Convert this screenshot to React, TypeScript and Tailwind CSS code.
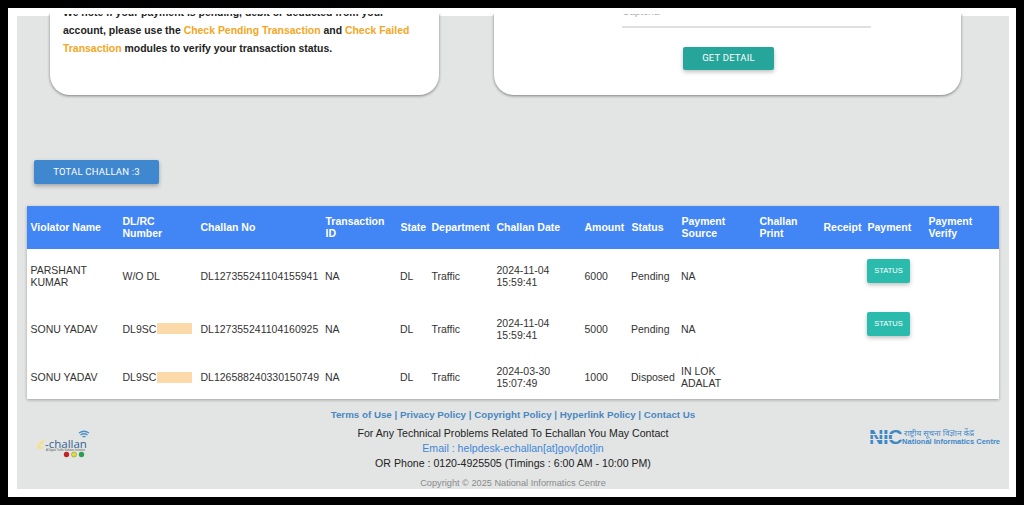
const columns = [
  { title: "Violator Name", width: "w-[92px]" },
  { title: "DL/RC Number", width: "w-[78px]" },
  { title: "Challan No", width: "w-[125px]" },
  { title: "Transaction ID", width: "w-[75px]" },
  { title: "State", width: "w-[31px]" },
  { title: "Department", width: "w-[65px]" },
  { title: "Challan Date", width: "w-[88px]" },
  { title: "Amount", width: "w-[47px]" },
  { title: "Status", width: "w-[50px]" },
  { title: "Payment Source", width: "w-[78px]" },
  { title: "Challan Print", width: "w-[64px]" },
  { title: "Receipt", width: "w-[44px]" },
  { title: "Payment", width: "w-[61px]" },
  { title: "Payment Verify", width: "w-[74px]" },
];

const rows = [
  {
    name: "PARSHANT KUMAR",
    plate: "W/O DL",
    hidden: false,
    challan: "DL127355241104155941",
    date: "2024-11-04 15:59:41",
    amount: "6000",
    status: "Pending",
    source: "NA",
    canCheck: true,
    height: "h-[53px]",
  },
  {
    name: "SONU YADAV",
    plate: "DL9SC",
    hidden: true,
    challan: "DL127355241104160925",
    date: "2024-11-04 15:59:41",
    amount: "5000",
    status: "Pending",
    source: "NA",
    canCheck: true,
    height: "h-[53px]",
  },
  {
    name: "SONU YADAV",
    plate: "DL9SC",
    hidden: true,
    challan: "DL126588240330150749",
    date: "2024-03-30 15:07:49",
    amount: "1000",
    status: "Disposed",
    source: "IN LOK ADALAT",
    canCheck: false,
    height: "h-[44px]",
  },
];

function EChallanLogo() {
  return (
    <div className="relative h-[30px] w-[55px]">
      <svg className="absolute left-0 top-0" width="55" height="30" viewBox="0 0 55 30" fill="none">
        {/* signal arcs */}
        <path d="M43 3 C46 0.8 50 0.8 53 3" stroke="#4a90c8" strokeWidth="1.5" />
        <path d="M44.5 5 C46.5 3.6 49.5 3.6 51.5 5" stroke="#4a90c8" strokeWidth="1.4" />
        <path d="M46.5 7 C47.5 6.2 48.5 6.2 49.5 7" stroke="#4a90c8" strokeWidth="1.3" />
        {/* e swoosh */}
        <path d="M9 9 C4 11 0 15 1.5 18.5 C4 20 7 18.5 9 16.5 C6.5 17.5 4.5 17.5 4 16 C5.5 14.5 8 12.5 9 9 Z" fill="#f6df8f" />
        {/* traffic lights */}
        <circle cx="30.5" cy="24.5" r="2.7" fill="#c0242a" />
        <circle cx="38" cy="24.5" r="2.5" fill="#e6da3a" stroke="#7d9a3a" strokeWidth="0.6" />
        <circle cx="45.5" cy="24.5" r="2.7" fill="#2f9e55" />
      </svg>
      <span className="absolute left-[9px] top-[6px] whitespace-nowrap font-['Open_Sans',sans-serif] text-[11.5px] leading-[15px] text-[#34618f]">
        -challan
      </span>
      <span className="absolute left-[10px] top-[19px] whitespace-nowrap font-['Liberation_Sans',sans-serif] text-[2.7px] leading-[3px] text-[#555]">
        A Digital Traffic Solution Initiative
      </span>
    </div>
  );
}

function NicLogo() {
  return (
    <div className="flex items-center gap-[2px] text-[#3f88c5]">
      <div className="relative h-[16px] w-[31px]">
        <span className="block font-['Liberation_Sans',sans-serif] text-[20px] font-bold leading-[16px] tracking-[-0.5px]">
          NIC
        </span>
        <div className="absolute left-0 right-0 top-[5px] h-px bg-[#e3e5e5]" />
        <div className="absolute left-0 right-0 top-[10px] h-px bg-[#e3e5e5]" />
      </div>
      <div className="flex flex-col">
        <span className="whitespace-nowrap pl-[2px] font-['Noto_Sans','Noto_Sans_Devanagari',sans-serif] text-[8.2px] leading-[9px]">
          राष्ट्रीय सूचना विज्ञान केंद्र
        </span>
        <span className="whitespace-nowrap font-['Liberation_Sans',sans-serif] text-[7.5px] font-bold leading-[9px]">
          National Informatics Centre
        </span>
      </div>
    </div>
  );
}

export default function App() {
  return (
    <div className="h-[505px] w-[1024px] overflow-hidden bg-black p-2 font-['Liberation_Sans',sans-serif]">
      <div className="h-[489px] bg-white pt-[6px]">
        <div className="h-[483px] overflow-hidden pb-2 pl-[9px] pr-[7px] pt-[2px]">
          <div className="flex h-[473px] flex-col bg-[#e3e5e5]">
            {/* top cards, scrolled partly out of view */}
            <div className="-mt-[24px] flex h-[103px] shrink-0 gap-[55px] pl-[33px]">
              <div className="flex w-[389px] flex-col justify-end rounded-b-[20px] bg-white pb-[37px] pl-[13px] pr-[20px] text-[10.45px] font-bold leading-[18px] text-[#222] shadow-[0_1px_3px_rgba(0,0,0,0.45)]">
                <p>
                  We note if your payment is pending, debit or deducted from your
                  <br />
                  account, please use the <span className="text-[#f5a623]">Check Pending Transaction</span> and{" "}
                  <span className="text-[#f5a623]">Check Failed</span>
                  <br />
                  <span className="text-[#f5a623]">Transaction</span> modules to verify your transaction status.
                </p>
              </div>
              <div className="flex w-[467px] flex-col justify-end rounded-b-[20px] bg-white pb-[25px] shadow-[0_1px_3px_rgba(0,0,0,0.45)]">
                <div className="mb-[19px] ml-[128px] w-[249px] border-b-2 border-[#e0e0e0] pb-[8px] text-[10px] leading-[12px] text-[#aaa]">
                  Captcha
                </div>
                <button className="ml-[189px] h-[23px] w-[91px] rounded-[2px] bg-[#26a69a] font-['Roboto',sans-serif] text-[9.5px] tracking-[0.2px] text-white shadow-[0_2px_4px_rgba(0,0,0,0.25)]">
                  GET DETAIL
                </button>
              </div>
            </div>

            <button className="ml-[17px] mt-[65px] h-[24px] w-[125px] shrink-0 rounded-[2px] bg-[#3f87cf] font-['Roboto',sans-serif] text-[9.5px] tracking-[0.2px] text-white shadow-[0_2px_4px_rgba(0,0,0,0.3)]">
              TOTAL CHALLAN :3
            </button>

            {/* challan table */}
            <table className="ml-[10px] mt-[22px] w-[972px] shrink-0 table-fixed border-collapse bg-white text-[10.5px] leading-[12px] text-[#333] shadow-[0_1px_3px_rgba(0,0,0,0.3)]">
              <colgroup>
                {columns.map((col) => (
                  <col key={col.title} className={col.width} />
                ))}
              </colgroup>
              <thead>
                <tr className="h-[43px] bg-[#4285f4] text-white">
                  {columns.map((col) => (
                    <th key={col.title} className="px-[3.5px] pb-[2px] text-left align-middle font-bold">
                      {col.title}
                    </th>
                  ))}
                </tr>
              </thead>
              <tbody>
                {rows.map((row) => (
                  <tr key={row.challan} className={row.height}>
                    <td className="px-[3.5px]">{row.name}</td>
                    <td className="px-[3.5px]">
                      <span className="flex items-center">
                        {row.plate}
                        {row.hidden && <span className="ml-px h-[11px] w-[35px] bg-[#fcd9a8]" />}
                      </span>
                    </td>
                    <td className="whitespace-nowrap px-[3.5px]">{row.challan}</td>
                    <td className="px-[3px]">NA</td>
                    <td className="px-[3px]">DL</td>
                    <td className="px-[3.5px]">Traffic</td>
                    <td className="px-[3.5px]">{row.date}</td>
                    <td className="px-[3.5px]">{row.amount}</td>
                    <td className="px-[3px]">{row.status}</td>
                    <td className="px-[3px]">{row.source}</td>
                    <td />
                    <td />
                    <td className="px-[3px]">
                      {row.canCheck && (
                        <button className="mb-[10px] block h-[24px] w-[43px] rounded-[2px] bg-[#2bbbad] text-[7.5px] text-white shadow-[0_2px_4px_rgba(0,0,0,0.25)]">
                          STATUS
                        </button>
                      )}
                    </td>
                    <td />
                  </tr>
                ))}
              </tbody>
            </table>

            {/* footer */}
            <div className="mt-[8px] grid flex-1 grid-cols-[1fr_auto_1fr] px-[9px]">
              <div className="pl-[10px] pt-[23px]">
                <EChallanLogo />
              </div>
              <div className="flex flex-col items-center text-[10.6px]">
                <p className="text-[9.75px] font-bold leading-[16px] text-[#4a87c0]">
                  Terms of Use | Privacy Policy | Copyright Policy | Hyperlink Policy | Contact Us
                </p>
                <p className="mt-[2px] leading-[16px] text-[#222]">
                  For Any Technical Problems Related To Echallan You May Contact
                </p>
                <p className="leading-[15px] text-[#4285d8]">Email : helpdesk-echallan[at]gov[dot]in</p>
                <p className="leading-[15px] text-[#222]">OR Phone : 0120-4925505 (Timings : 6:00 AM - 10:00 PM)</p>
                <p className="mt-[5px] text-[9.2px] leading-[14px] text-[#8a8a8a]">
                  Copyright © 2025 National Informatics Centre
                </p>
              </div>
              <div className="flex justify-end pt-[21px]">
                <div>
                  <NicLogo />
                </div>
              </div>
            </div>
          </div>
        </div>
      </div>
    </div>
  );
}
